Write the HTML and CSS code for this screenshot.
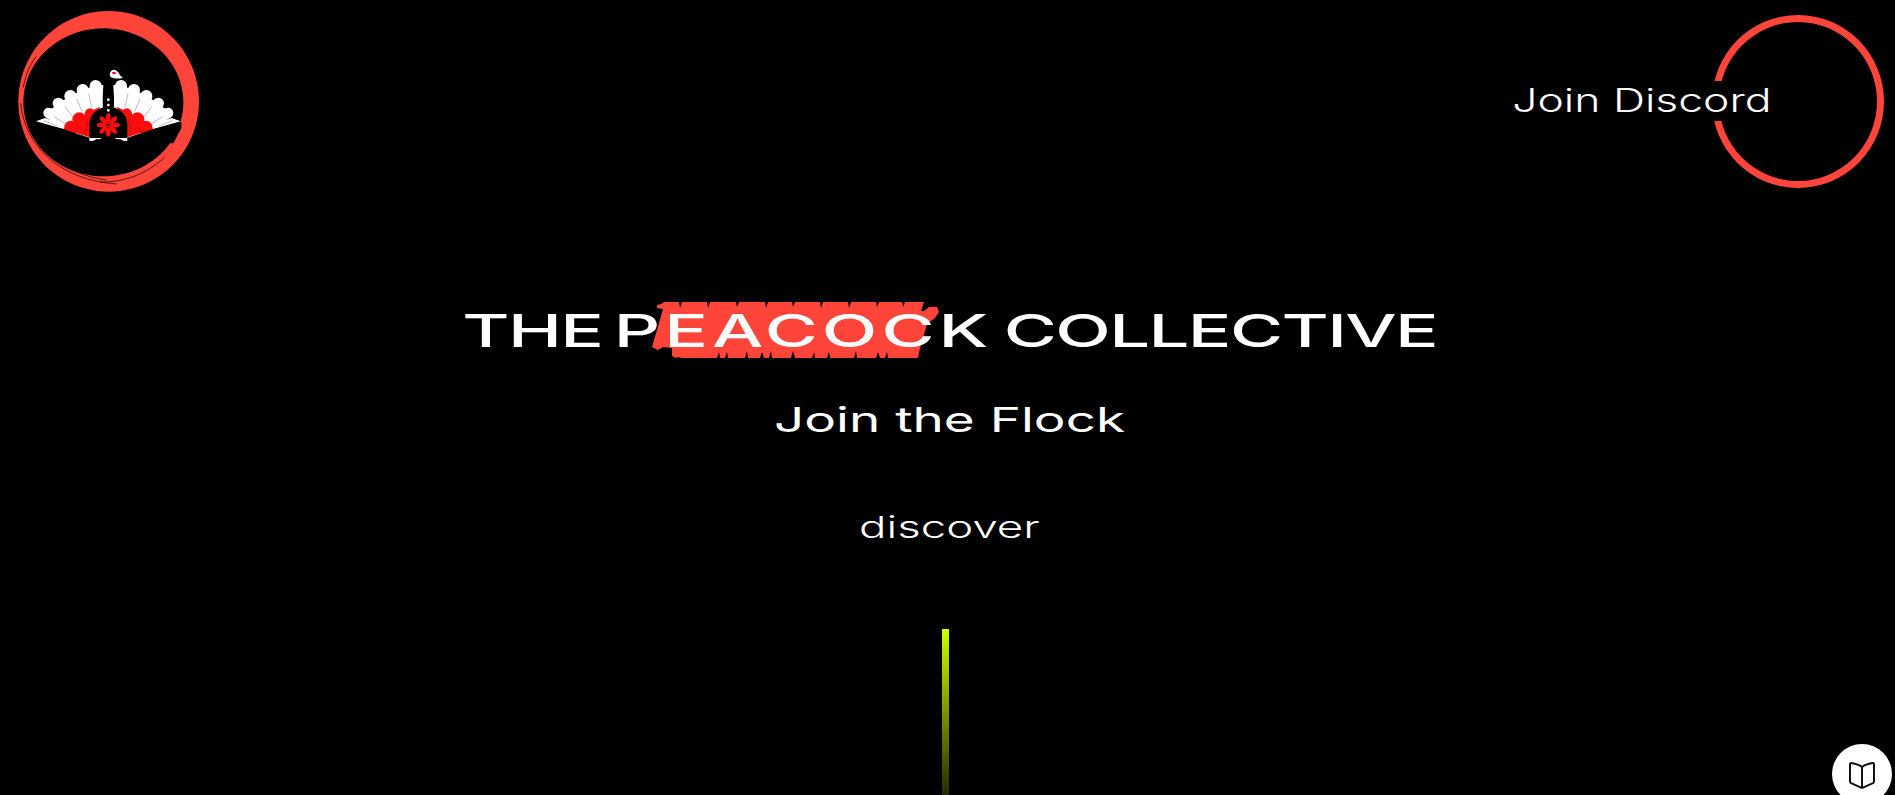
FILE: index.html
```html
<!DOCTYPE html>
<html lang="en">
<head>
    <meta charset="UTF-8">
    <meta name="viewport" content="width=device-width, initial-scale=1.0">
    <title>The Peacock Collective</title>
    <link rel="stylesheet" href="styles.css">
</head>
<body>
    <header class="site-header">
        <a class="logo" href="#" aria-label="The Peacock Collective">
            <svg class="logo-mark" viewBox="0 0 660 630" width="220" height="210">
                <defs>
                    <g id="wing">
                        <polygon class="white" points="132,345 175,310 211,288 247,269 287,257 310,255 306,330 190,386"/>
                        <g class="feather">
                            <line x1="295" y1="400" x2="287" y2="258" stroke-width="36"/>
                            <line x1="285" y1="400" x2="248" y2="270" stroke-width="36"/>
                            <line x1="275" y1="405" x2="211" y2="288" stroke-width="36"/>
                            <line x1="270" y1="405" x2="175" y2="310" stroke-width="34"/>
                            <line x1="265" y1="405" x2="146" y2="339" stroke-width="32"/>
                        </g>
                        <polygon class="white" points="108,364 135,354 210,380 200,390"/>
                        <path class="gap" d="M266,280 L275,322 M230,296 L246,335 M194,320 L220,352 M162,350 L196,372 M132,362 L172,378"/>
                        <polygon class="red" points="190,386 268,412 300,320 262,338 225,362"/>
                        <circle class="red" cx="213" cy="382" r="20"/>
                        <circle class="red" cx="238" cy="358" r="21"/>
                        <circle class="red" cx="270" cy="341" r="16"/>
                        <path class="gap-dark" d="M226,398 L236,378 M256,392 L264,362"/>
                        <polygon class="black" points="106,367 190,387 268,413 268,430 130,430 106,385"/>
                    </g>
                    <ellipse id="petal" class="red" cx="325" cy="354" rx="7" ry="14"/>
                </defs>
                <path class="brush" fill-rule="evenodd" d="M326,33 A271,271 0 1 1 325.9,33 Z M310,85 A240,222 0 1 0 310.1,85 Z"/>
                <path class="streak" d="M62,310 C75,440 180,540 350,552 M74,330 C95,430 190,525 320,540 M300,546 C380,548 450,515 495,470 M70,262 C76,225 90,195 108,170 M88,240 C100,205 120,175 150,145"/>
                <use href="#wing"/>
                <use href="#wing" transform="translate(650,0) scale(-1,1)"/>
                <path class="black" d="M268,414 L268,372 Q270,336 310,322 L312,240 L338,240 L340,322 Q380,336 382,372 L382,414 Z"/>
                <path class="white" d="M329,222 Q332,208 345,209 Q356,214 360,226 L369,234 Q345,238 333,232 Q329,228 329,222 Z"/>
                <ellipse class="red" cx="342" cy="219" rx="6" ry="4"/>
                <circle class="white" cx="325" cy="299" r="4"/>
                <circle class="white" cx="325" cy="315" r="4"/>
                <circle class="white" cx="325" cy="331" r="4"/>
                <use href="#petal"/>
                <use href="#petal" transform="rotate(45 325 375)"/>
                <use href="#petal" transform="rotate(90 325 375)"/>
                <use href="#petal" transform="rotate(135 325 375)"/>
                <use href="#petal" transform="rotate(180 325 375)"/>
                <use href="#petal" transform="rotate(225 325 375)"/>
                <use href="#petal" transform="rotate(270 325 375)"/>
                <use href="#petal" transform="rotate(315 325 375)"/>
                <circle class="red" cx="325" cy="375" r="7"/>
                <circle class="black" cx="325" cy="375" r="3"/>
            </svg>
        </a>
        <a class="discord" href="#">
            <span class="discord-label">Join Discord</span>
            <span class="discord-ring"></span>
        </a>
    </header>

    <main class="hero">
        <div class="title-wrap">
            <svg class="brush-mark" viewBox="0 0 290 60" width="290" height="60">
                <path class="brush" d="M5,3 L9,2 L12,0 L27,0 L28,6 L30,0 L55,0 L56,6 L58,0 L84,0 L85,5 L87,0 L113,0 L114,6 L116,0 L140,0 L141,5 L143,0 L168,0 L169,6 L171,0 L196,0 L197,6 L199,0 L224,0 L225,5 L227,0 L250,0 L251,5 L253,0 L272,0 L269,9 L272,9 L277,5 L285,5 L287,10 L283,16 L275,22 L271,36 L268,46 L266,56 L236,56 L235,50 L233,56 L228,56 L226,50 L224,56 L205,56 L204,49 L202,56 L178,56 L177,50 L175,56 L163,56 L162,50 L160,56 L143,56 L141,49 L139,56 L120,56 L119,49 L117,56 L112,56 L110,50 L108,56 L96,56 L95,49 L93,56 L76,56 L75,50 L73,56 L68,56 L67,50 L65,56 L30,56 L26,55 L24,56 L20,54 L20,46 L11,45 L6,48 L0,45 L2,38 L5,28 L9,14 L11,7 L5,6 Z"/>
            </svg>
            <h1 class="title">THE <span class="title-word">PEACOCK</span> COLLECTIVE</h1>
        </div>
        <h2 class="tagline">Join the Flock</h2>
        <p class="discover">discover</p>
        <div class="scroll-bar"></div>
    </main>

    <button class="docs-btn" aria-label="Docs">
        <svg viewBox="0 0 26 28" width="26" height="28">
            <path d="M13,6 C10.5,4 6,2.6 2.5,2 C1.6,1.9 1,2.5 1,3.3 L1,20.5 C1,21.3 1.4,21.8 2.1,22.2 L12,26.6 C12.6,26.9 13.4,26.9 14,26.6 L23.9,22.2 C24.6,21.8 25,21.3 25,20.5 L25,3.3 C25,2.5 24.4,1.9 23.5,2 C20,2.6 15.5,4 13,6 Z M13,6 L13,26.5"/>
        </svg>
    </button>
</body>
</html>
```

FILE: styles.css
```css
:root {
    --accent-color: #ff453a;
    --text-color: #ffffff;
    --bar-color: #ccff00;
}

* {
    box-sizing: border-box;
    margin: 0;
    padding: 0;
}

html, body {
    height: 100%;
    overflow: hidden;
}

body {
    background-color: #000;
    color: var(--text-color);
    font-family: Inter, "Liberation Sans", sans-serif;
}

a {
    color: inherit;
    text-decoration: none;
}

.site-header {
    display: flex;
    justify-content: space-between;
    align-items: flex-start;
    height: 210px;
}

.logo-mark {
    display: block;
}

.brush { fill: var(--accent-color); }
.white { fill: #fff; }
.black { fill: #000; }
.red { fill: #ff0d0d; }

.feather line {
    stroke: #fff;
    stroke-linecap: round;
}

.gap {
    fill: none;
    stroke: #9a9a9a;
    stroke-width: 2;
}

.gap-dark {
    fill: none;
    stroke: #8c0a0a;
    stroke-width: 2;
}

.streak {
    fill: none;
    stroke: #000;
    stroke-width: 2;
}

.discord {
    display: flex;
    align-items: center;
    padding: 15px 11px 0 0;
}

.discord-label {
    position: relative;
    z-index: 1;
    display: block;
    margin: -2px -59px 0 0;
    background-color: #000;
    font-size: 32px;
    font-weight: 300;
    line-height: 40px;
    white-space: nowrap;
    transform: scaleX(1.39);
    transform-origin: right center;
}

.discord-ring {
    display: block;
    width: 172px;
    height: 173px;
    border: 7px solid var(--accent-color);
    border-radius: 50%;
}

.hero {
    display: flex;
    flex-direction: column;
    align-items: center;
    padding-top: 96px;
}

.title-wrap {
    position: relative;
    margin-left: 4px;
}

.brush-mark {
    position: absolute;
    top: -4px;
    left: 5px;
}

.title {
    position: relative;
    font-size: 45px;
    font-weight: 450;
    line-height: 50px;
    letter-spacing: -1px;
    word-spacing: -4px;
    white-space: nowrap;
    transform: scaleX(1.61);
}

.title-word {
    letter-spacing: 2.5px;
}

.tagline {
    margin: 44px 0 0 4px;
    font-size: 34px;
    font-weight: 400;
    line-height: 40px;
    transform: scaleX(1.56);
}

.discover {
    margin: 67px 0 0 4px;
    font-size: 30px;
    font-weight: 300;
    line-height: 40px;
    transform: scaleX(1.52);
}

.scroll-bar {
    flex: none;
    width: 7px;
    height: 200px;
    margin-top: 82px;
    margin-right: 4px;
    background: linear-gradient(to bottom, var(--bar-color), rgba(204, 255, 0, 0));
}

.docs-btn {
    position: fixed;
    top: 744px;
    left: 1832px;
    display: flex;
    justify-content: center;
    padding-top: 17px;
    width: 60px;
    height: 60px;
    border: none;
    border-radius: 50%;
    background-color: #fff;
}

.docs-btn svg {
    fill: none;
    stroke: #111;
    stroke-width: 2;
    stroke-linejoin: round;
}
```
